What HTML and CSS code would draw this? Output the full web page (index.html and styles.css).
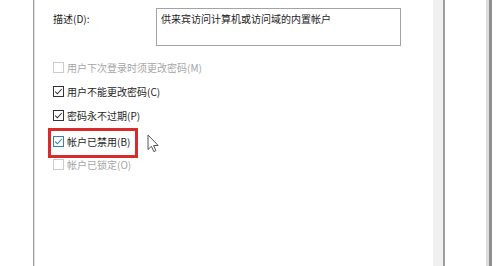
FILE: index.html
```html
<!DOCTYPE html>
<html lang="zh-CN">
<head>
    <meta charset="UTF-8">
    <title>帐户属性</title>
    <link rel="stylesheet" href="styles.css">
</head>
<body>
    <div class="screen">
        <div class="gutter"></div>
        <div class="panel">
            <div class="desc-row">
                <span class="label">描述(D):</span>
                <div class="textbox">供来宾访问计算机或访问域的内置帐户</div>
            </div>

            <div class="checks">
                <div class="check disabled">
                    <svg class="box" width="11" height="11" viewBox="0 0 11 11"><rect x="0.5" y="0.5" width="10" height="10" fill="#fff" stroke="#cccccc"/></svg>
                    <span>用户下次登录时须更改密码(M)</span>
                </div>
                <div class="check">
                    <svg class="box" width="11" height="11" viewBox="0 0 11 11"><rect x="0.5" y="0.5" width="10" height="10" fill="#fff" stroke="#333"/><polyline points="2.2,5.6 4.4,7.8 8.8,3" fill="none" stroke="#333" stroke-width="1.1"/></svg>
                    <span>用户不能更改密码(C)</span>
                </div>
                <div class="check">
                    <svg class="box" width="11" height="11" viewBox="0 0 11 11"><rect x="0.5" y="0.5" width="10" height="10" fill="#fff" stroke="#333"/><polyline points="2.2,5.6 4.4,7.8 8.8,3" fill="none" stroke="#333" stroke-width="1.1"/></svg>
                    <span>密码永不过期(P)</span>
                </div>
                <div class="check">
                    <span class="highlight">
                        <svg class="box" width="11" height="11" viewBox="0 0 11 11"><rect x="0.5" y="0.5" width="10" height="10" fill="#fff" stroke="#2f7fcf"/><polyline points="2.2,5.6 4.4,7.8 8.8,3" fill="none" stroke="#2f7fcf" stroke-width="1.1"/></svg>
                        <span>帐户已禁用(B)</span>
                    </span>
                    <svg class="cursor" width="13" height="19" viewBox="0 0 13 19"><path d="M1 1 L1 15.5 L4.4 12.3 L6.8 17.6 L8.9 16.7 L6.6 11.5 L11.2 11.5 Z" fill="#fff" stroke="#555" stroke-width="1" stroke-linejoin="miter"/></svg>
                </div>
                <div class="check disabled">
                    <svg class="box" width="11" height="11" viewBox="0 0 11 11"><rect x="0.5" y="0.5" width="10" height="10" fill="#fff" stroke="#cccccc"/></svg>
                    <span>帐户已锁定(O)</span>
                </div>
            </div>
        </div>
        <div class="strip"></div>
        <div class="side"></div>
        <div class="edge"></div>
        <div class="tail"></div>
    </div>
</body>
</html>
```

FILE: styles.css
```css
body { margin: 0; background: #fff; font-family: "Noto Sans CJK SC", "Noto Sans", sans-serif; font-size: 10px; color: #1e1e1e; }
.screen { display: flex; width: 500px; height: 266px; overflow: hidden; background: #fff; }
.gutter { flex: none; width: 33px; border-right: 1px solid #9c9c9c; box-shadow: 1px 0 0 #e2e2e2; }
.panel { flex: none; width: 380px; padding: 8px 0 0 19px; }
.desc-row { display: flex; align-items: flex-start; }
.label { width: 103px; padding-top: 4px; line-height: 14px; }
.textbox {
    width: 239px; height: 33px;
    border: 1px solid #a3a3a3;
    padding: 3px 0 0 4px;
    line-height: 13px;
    box-sizing: content-box;
}
.checks { margin-top: 9px; display: flex; flex-direction: column; }
.check { display: flex; align-items: center; height: 24.4px; position: relative; }
.check .box { flex: none; margin-right: 3px; }
.check.disabled { color: #a6a6a6; }
.highlight {
    display: inline-flex; align-items: center;
    padding: 3px 5px 6px 2px;
    margin: -3px -5px -6px -2px;
    outline: 3px solid #d82b2b;
    position: relative; top: 1px;
}
.cursor { position: absolute; left: 94px; top: 6px; }
.strip { flex: none; width: 10px; background: #f0f0f0; border-right: 2px solid #9d9d9d; }
.side { flex: none; width: 41px; border-right: 3px solid #dcdcdc; }
.edge { flex: none; width: 3px; background: #8f8f8f; }
.tail { flex: 1; }
```
